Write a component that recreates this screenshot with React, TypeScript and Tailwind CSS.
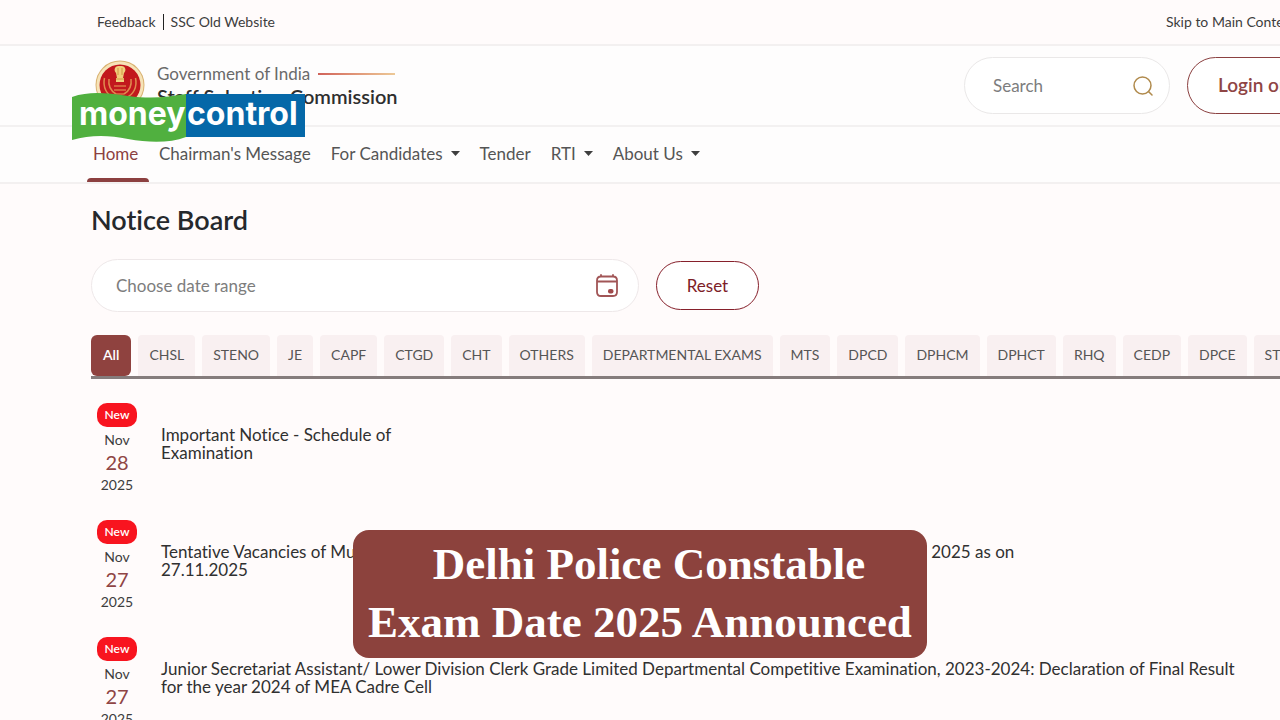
const NAV_LINKS = [
  { label: "Home", active: true },
  { label: "Chairman's Message" },
  { label: "For Candidates", menu: true },
  { label: "Tender" },
  { label: "RTI", menu: true },
  { label: "About Us", menu: true },
];

const TABS = [
  "All",
  "CHSL",
  "STENO",
  "JE",
  "CAPF",
  "CTGD",
  "CHT",
  "OTHERS",
  "DEPARTMENTAL EXAMS",
  "MTS",
  "DPCD",
  "DPHCM",
  "DPHCT",
  "RHQ",
  "CEDP",
  "DPCE",
  "STENO LDCE",
];

const NOTICES = [
  {
    month: "Nov",
    day: "28",
    year: "2025",
    lines: ["Important Notice - Schedule of", "Examination"],
  },
  {
    month: "Nov",
    day: "27",
    year: "2025",
    lines: [
      "Tentative Vacancies of Multi-Tasking (Non-Technical) Staff, and Havaldar (CBIC & CBN) the Examination 2025 as on",
      "27.11.2025",
    ],
  },
  {
    month: "Nov",
    day: "27",
    year: "2025",
    lines: [
      "Junior Secretariat Assistant/ Lower Division Clerk Grade Limited Departmental Competitive Examination, 2023-2024: Declaration of Final Result",
      "for the year 2024 of MEA Cadre Cell",
    ],
  },
];

function Emblem() {
  return (
    <svg className="h-[50px] w-[50px] shrink-0" viewBox="0 0 50 50" aria-hidden="true">
      <circle cx="25" cy="25" r="24.5" fill="#d9b271" />
      <circle cx="25" cy="25" r="23.5" fill="#f6e3b8" />
      <circle cx="25" cy="25" r="20.5" fill="#c2181d" />
      <path
        d="M9.500 18c-2 9 2 17 10 20M40.500 18c2 9-2 17-10 20M14 19c-1 7 2 12 7 15M36 19c1 7-2 12-7 15"
        stroke="#e08a4f"
        strokeWidth="1.500"
        fill="none"
      />
      <path
        d="M20 8c1-2 3-2 5-2s4 0 5 2c1 2 0 4-1 5l-1 5h1v4h-8v-4h1l-1-5c-1-1-2-3-1-5z"
        fill="#f1cf7c"
      />
      <path d="M23 8v7M27 8v7M21 19h8" stroke="#c98a35" strokeWidth="0.800" />
      <path d="M19 26h12M19 30h12M21 34h8" stroke="#e7a35c" strokeWidth="1.200" />
    </svg>
  );
}

function MoneycontrolLogo() {
  return (
    <svg
      className="absolute top-[92px] left-[72px] h-[51px] w-[233px]"
      viewBox="0 0 233 51"
      role="img"
      aria-label="moneycontrol"
    >
      <path d="M114 2h119v43H114z" fill="#0568a8" />
      <path
        d="M0 5C18-1 34 1 56 4c24 3 40 1 58-2v43c-16 6-36 6-58 2C36 43 18 43 0 48z"
        fill="#50b03f"
      />
      <g fill="#fff" fontFamily="Inter, sans-serif" fontWeight="700" fontSize="32">
        <text x="7" y="33">money</text>
        <text x="115" y="33">control</text>
      </g>
    </svg>
  );
}

function Caret() {
  return (
    <svg className="h-[5px] w-[9px]" viewBox="0 0 9 5" aria-hidden="true">
      <path d="M0 0h9L4.500 5z" fill="#3f3f3f" />
    </svg>
  );
}

function SearchIcon() {
  return (
    <svg className="h-5 w-5" viewBox="0 0 20 20" fill="none" aria-hidden="true">
      <circle cx="9.500" cy="9.500" r="8.500" stroke="#b08a4c" strokeWidth="1.500" />
      <path d="M15.500 15.500l3.500 3.500" stroke="#b08a4c" strokeWidth="1.500" strokeLinecap="round" />
    </svg>
  );
}

function CalendarIcon() {
  return (
    <svg className="h-6 w-[22px]" viewBox="0 0 22 24" fill="none" aria-hidden="true">
      <path
        d="M5 2.500h12q4 0 4 4v11.500q0 4-4 4H5q-4 0-4-4V6.500q0-4 4-4zM1 7.500h20M5 1v1.500M17 1v1.500"
        stroke="#a15556"
        strokeWidth="1.800"
        strokeLinecap="round"
      />
      <rect x="12" y="15" width="5.500" height="4.500" rx="2" fill="#a04a4b" />
    </svg>
  );
}

function Header() {
  return (
    <header className="bg-[#fefdfd]">
      <div className="flex h-[46px] items-center justify-between border-b-2 border-[#f3f0f0] bg-[#fffbfb] pl-[97px] text-sm text-[#3d3d3d]">
        <div className="flex items-center gap-[7px]">
          <a href="#feedback">Feedback</a>
          <span className="h-4 w-px bg-[#222]" />
          <a href="#old">SSC Old Website</a>
        </div>
        <div className="w-[114px] whitespace-nowrap">
          <a href="#main">Skip to Main Content</a>
        </div>
      </div>

      <div className="flex h-[81px] items-center justify-between border-b-2 border-[#f3f1f1] pl-[95px]">
        <div className="flex items-center gap-3 pb-0.5">
          <Emblem />
          <div>
            <div className="flex items-center gap-2">
              <span className="text-[17px] leading-[22px] text-[#6a6a6a]">Government of India</span>
              <span className="h-0.5 w-[77px] bg-linear-to-r from-[#d0625a] to-[#ecc997]" />
            </div>
            <div className="text-xl leading-[22px] font-semibold text-[#2e2e2e]">
              Staff Selection Commission
            </div>
          </div>
        </div>
        <div className="flex items-center gap-[17px]">
          <form className="flex h-[57px] w-[206px] items-center rounded-full border border-[#eae8e8] bg-white pr-4 pl-7">
            <input
              type="search"
              aria-label="Search"
              placeholder="Search"
              className="w-full min-w-0 flex-1 bg-transparent text-[17px] outline-none placeholder:text-[#7d7d7d]"
            />
            <button type="button" aria-label="Submit search">
              <SearchIcon />
            </button>
          </form>
          <div className="w-[93px]">
            <button
              type="button"
              className="h-[57px] w-[220px] rounded-full border border-[#8b4040] bg-white pl-[30px] text-left text-[19px] font-semibold whitespace-nowrap text-[#8f4545]"
            >
              Login or Register
            </button>
          </div>
        </div>
      </div>

      <nav className="flex h-[57px] gap-5 border-b-2 border-[#f3f0f0] pl-[87px] text-[17px] text-[#555]">
        {NAV_LINKS.map((link) => (
          <a
            key={link.label}
            href="#nav"
            className={
              link.active
                ? "relative -mr-2.5 flex w-[62px] items-center pb-0.5 pl-1.5 text-[#8c4040] after:absolute after:inset-x-0 after:bottom-0 after:h-1 after:rounded-t after:bg-[#8c4040]"
                : "flex items-center gap-2 pb-0.5"
            }
          >
            {link.label}
            {link.menu && <Caret />}
          </a>
        ))}
      </nav>
    </header>
  );
}

function NoticeBoard() {
  return (
    <main className="pl-[91px]">
      <h1 className="pt-[18px] text-[27px] leading-9 font-semibold text-[#25282c]">Notice Board</h1>

      <div className="mt-[21px] flex items-center gap-[17px]">
        <div className="flex h-[53px] w-[548px] items-center rounded-full border border-[#eee8e9] bg-white pr-5 pl-6">
          <input
            type="text"
            aria-label="Date range"
            placeholder="Choose date range"
            className="w-full min-w-0 flex-1 bg-transparent text-[17px] outline-none placeholder:text-[#7d7d7d]"
          />
          <button type="button" aria-label="Open calendar">
            <CalendarIcon />
          </button>
        </div>
        <button
          type="button"
          className="h-[49px] w-[103px] rounded-full border border-[#86202b] bg-white text-[17px] text-[#7d2027]"
        >
          Reset
        </button>
      </div>

      <div className="mt-[23px] flex gap-[7px] border-b-3 border-[#857c7c]">
        {TABS.map((tab) => (
          <button
            key={tab}
            type="button"
            className={
              tab === "All"
                ? "h-[41px] shrink-0 rounded-md bg-[#8f423f] px-3 pb-0.5 text-sm font-semibold text-white"
                : "h-[41px] shrink-0 rounded-t bg-[#f9f0f1] px-[11px] pb-0.5 text-sm whitespace-nowrap text-[#555]"
            }
          >
            {tab}
          </button>
        ))}
      </div>

      <ul className="mt-6 flex flex-col gap-[25px] pl-1.5">
        {NOTICES.map((notice) => (
          <li key={notice.day + notice.lines[1]} className="flex gap-6">
            <div className="flex w-10 shrink-0 flex-col items-center text-sm leading-[21px] text-[#3d3d3d]">
              <span className="mb-0.5 h-6 w-full rounded-[10px] bg-[#f8141f] text-center text-xs leading-[23px] font-semibold text-white">
                New
              </span>
              <span>{notice.month}</span>
              <span className="text-xl leading-6 text-[#8f4545]">{notice.day}</span>
              <span>{notice.year}</span>
            </div>
            <a href="#notice" className="pt-[23px] text-[17px] leading-[18px] whitespace-nowrap text-[#303030]">
              {notice.lines[0]}
              <br />
              {notice.lines[1]}
            </a>
          </li>
        ))}
      </ul>
    </main>
  );
}

export default function App() {
  return (
    <div className="relative h-screen overflow-hidden bg-[#fffbfb] font-['Lato',sans-serif] [font-variant-ligatures:none]">
      <Header />
      <NoticeBoard />
      <MoneycontrolLogo />

      {/* Headline banner */}
      <div className="absolute inset-x-0 bottom-[62px] flex justify-center">
        <h2 className="w-[574px] rounded-2xl bg-[#8c423d] pt-[5px] pb-[7px] text-center font-['Liberation_Serif',serif] text-[45px] leading-[58px] font-bold whitespace-nowrap text-white">
          <span className="block pl-[18px]">Delhi Police Constable</span>
          Exam Date 2025 Announced
        </h2>
      </div>
    </div>
  );
}
